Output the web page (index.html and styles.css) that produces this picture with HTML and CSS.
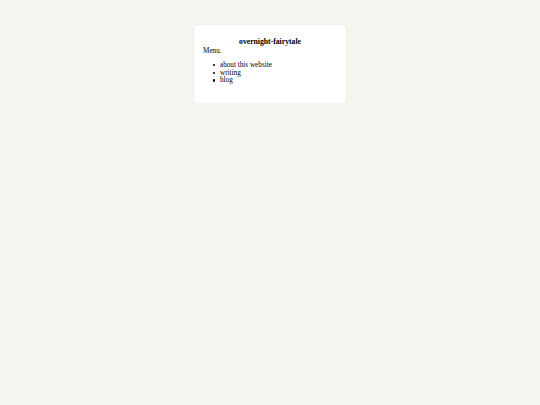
FILE: index.html
```html
<!DOCTYPE html>
<html>
<head>
<meta charset="utf-8">
<link rel="stylesheet" href="styles.css">
</head>
<body>
<div class="card">
  <h1 class="title">overnight-fairytale</h1>
  <p class="label">Menu.</p>
  <ul class="menu">
    <li>about this website</li>
    <li>writing</li>
    <li>blog</li>
  </ul>
</div>
</body>
</html>
```
FILE: styles.css
```css
html, body {
  margin: 0;
  padding: 0;
  background: #f6f5f0;
}
body {
  font-family: "Liberation Serif", "Times New Roman", serif;
  color: #000;
  padding-top: 25px;
}
.card {
  width: 152px;
  height: 78px;
  box-sizing: border-box;
  margin: 0 auto;
  background: #fff;
  border-radius: 3px;
  box-shadow: 0 0 2px rgba(0, 0, 0, 0.1);
  padding: 12px 9px 9px;
  font-size: 7.2px;
  line-height: 8px;
}
.title {
  margin: 0;
  font-size: 7.7px;
  line-height: 10px;
  font-weight: bold;
  text-align: center;
}
.label {
  margin: 0 0 7px;
}
.menu {
  margin: 0;
  padding-left: 17px;
  list-style: none;
}
.menu li {
  line-height: 7.6px;
}
.menu li::before {
  content: "";
  display: inline-block;
  width: 2.2px;
  height: 2.2px;
  border-radius: 50%;
  background: #000;
  margin-left: -6.8px;
  margin-right: 4.6px;
  vertical-align: middle;
}
```
